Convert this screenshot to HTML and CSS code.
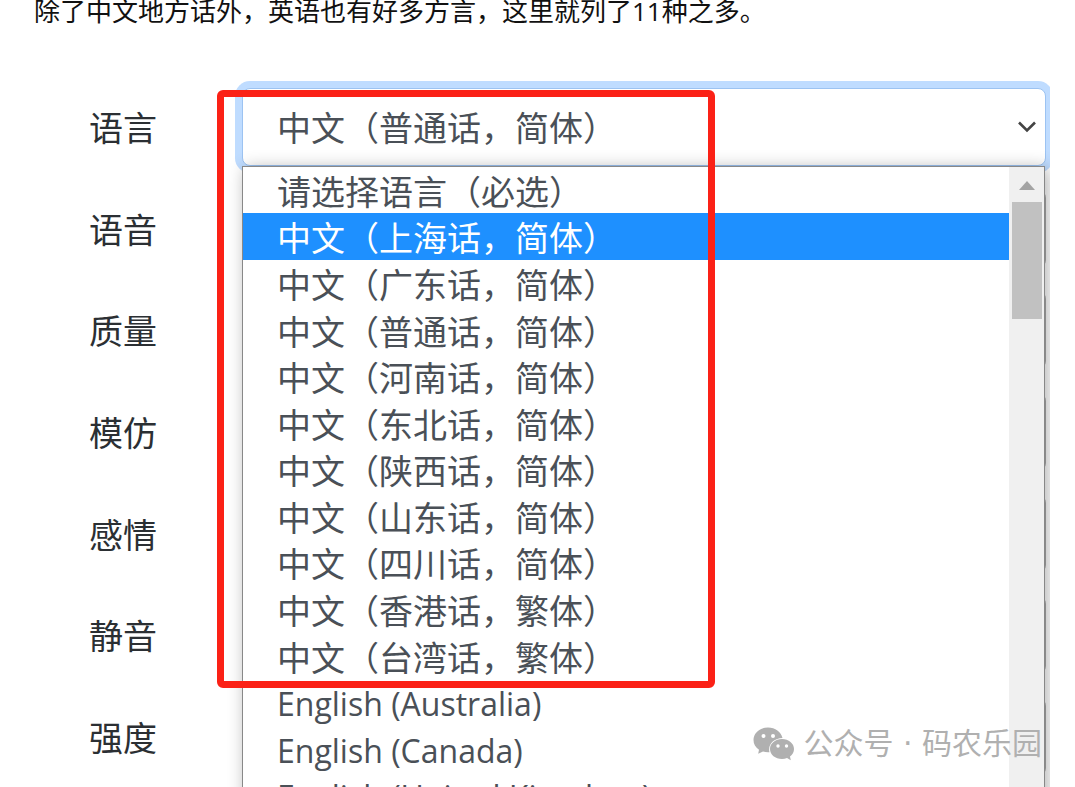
FILE: index.html
```
<!DOCTYPE html>
<html lang="zh-CN">
<head>
    <meta charset="UTF-8">
    <meta name="viewport" content="width=device-width, initial-scale=1.0">
    <title>语言选择</title>
    <link rel="stylesheet" href="styles.css">
</head>
<body>
    <main class="article">
        <p class="intro">除了中文地方话外，英语也有好多方言，这里就列了11种之多。</p>

        <div class="figure">
            <form class="voice-form">
                <div class="form-row">
                    <label for="language">语言</label>
                    <div class="field active">
                        <select id="language">
                            <option>中文（普通话，简体）</option>
                        </select>
                        <svg class="chevron" viewBox="0 0 20 14" aria-hidden="true">
                            <path d="M2 2.5L10 10.5L18 2.5" fill="none" stroke="#444" stroke-width="2.6"/>
                        </svg>
                        <div class="dropdown">
                            <ul class="options" role="listbox" aria-label="语言">
                                <li role="option">请选择语言（必选）</li>
                                <li role="option" class="selected" aria-selected="true">中文（上海话，简体）</li>
                                <li role="option">中文（广东话，简体）</li>
                                <li role="option">中文（普通话，简体）</li>
                                <li role="option">中文（河南话，简体）</li>
                                <li role="option">中文（东北话，简体）</li>
                                <li role="option">中文（陕西话，简体）</li>
                                <li role="option">中文（山东话，简体）</li>
                                <li role="option">中文（四川话，简体）</li>
                                <li role="option">中文（香港话，繁体）</li>
                                <li role="option">中文（台湾话，繁体）</li>
                                <li role="option" class="latin">English (Australia)</li>
                                <li role="option" class="latin">English (Canada)</li>
                                <li role="option" class="latin">English (United Kingdom)</li>
                            </ul>
                            <div class="scrollbar">
                                <svg class="arrow-up" viewBox="0 0 16 9" aria-hidden="true">
                                    <path d="M8 0L16 9H0Z" fill="#a3a3a3"/>
                                </svg>
                                <div class="thumb"></div>
                            </div>
                        </div>
                    </div>
                </div>
                <div class="form-row">
                    <label for="voice">语音</label>
                    <div class="field"><select id="voice"></select></div>
                </div>
                <div class="form-row">
                    <label for="quality">质量</label>
                    <div class="field"><select id="quality"></select></div>
                </div>
                <div class="form-row">
                    <label for="imitate">模仿</label>
                    <div class="field"><select id="imitate"></select></div>
                </div>
                <div class="form-row">
                    <label for="emotion">感情</label>
                    <div class="field"><select id="emotion"></select></div>
                </div>
                <div class="form-row">
                    <label for="silence">静音</label>
                    <div class="field"><select id="silence"></select></div>
                </div>
                <div class="form-row">
                    <label for="strength">强度</label>
                    <div class="field"><select id="strength"></select></div>
                </div>
            </form>

            <div class="highlight"></div>

            <div class="watermark">
                <svg viewBox="0 0 42 34" aria-hidden="true">
                    <path d="M15 0.500C6.800 0.500 0.500 6 0.500 13C0.500 17 2.500 20.400 6 22.700L5.200 26.800L10 24.600C12 25.100 14 25.400 16.500 25.200C14.500 17.500 21 11 29.500 11C28 5 22.300 0.500 15 0.500Z"/>
                    <path d="M29 12C22.300 12 17 16.500 17 22C17 27.700 22.300 32 29 32C30.800 32 32.500 31.700 34 31.100L37.800 33.200L37 29.600C39.500 27.700 41 25 41 22C41 16.500 35.700 12 29 12Z"/>
                    <g fill="#fff">
                        <circle cx="10.500" cy="9" r="2"/>
                        <circle cx="20" cy="9" r="2"/>
                        <circle cx="25" cy="19" r="1.700"/>
                        <circle cx="33.500" cy="19" r="1.700"/>
                    </g>
                </svg>
                <span>公众号 · 码农乐园</span>
            </div>
        </div>
    </main>
</body>
</html>
```
FILE: styles.css
```
* {
    box-sizing: border-box;
}
body {
    height: 100vh;
    margin: 0;
    overflow: hidden;
    background: #fff;
    font-family: "Open Sans", "Noto Sans CJK SC", sans-serif;
}
.article {
    padding: 0 25px;
}
.intro {
    margin: 0;
    padding: 0 9px;
    height: 76px;
    font-family: "Open Sans", "Noto Sans CJK SC", sans-serif;
    font-size: 26px;
    line-height: 22px;
    color: #111;
}
.figure {
    position: relative;
    overflow: hidden;
}
.voice-form {
    display: flex;
    flex-direction: column;
    height: 712px;
}
.form-row {
    display: flex;
    flex: 1;
    align-items: center;
    padding: 0 4px 0 64px;
}
.form-row label {
    width: 153px;
    padding-top: 2px;
    font-size: 34px;
    line-height: 44px;
    color: #2b2f33;
}
.field {
    position: relative;
    flex: 1;
    height: 78px;
}
.field select {
    appearance: none;
    display: block;
    width: 100%;
    height: 100%;
    padding: 2px 34px 0;
    border: 2px solid #aaa;
    border-radius: 8px;
    background: #fff;
    font-family: inherit;
    font-size: 34px;
    color: #4a5057;
}
.field.active {
    z-index: 1;
}
.field.active select {
    border: 1px solid #9cc3f2;
    outline: none;
    box-shadow: 0 0 0 7px #bfdcff;
}
.chevron {
    position: absolute;
    top: 32px;
    right: 9px;
    width: 20px;
    height: 14px;
}
.dropdown {
    position: absolute;
    top: 100%;
    left: 0;
    right: 1px;
    display: flex;
    border: 1px solid #888;
    background: #fff;
    box-shadow: 3px 2px 16px rgba(0, 0, 0, 0.3);
}
.options {
    flex: 1;
    display: grid;
    grid-auto-rows: minmax(0, 1fr);
    height: 652px;
    margin: 0;
    padding: 0;
    list-style: none;
    font-size: 34px;
    line-height: 50px;
    color: #4a5057;
}
.options li {
    padding-left: 34px;
}
.options .latin {
    font-size: 32px;
}
.options .selected {
    background: #1e90ff;
    color: #fff;
}
.scrollbar {
    display: flex;
    flex-direction: column;
    align-items: center;
    gap: 12px;
    width: 35px;
    padding-top: 14px;
    background: #f0f0f0;
}
.arrow-up {
    width: 16px;
    height: 9px;
}
.thumb {
    width: 30px;
    height: 117px;
    background: #c1c1c1;
}
.highlight {
    position: absolute;
    z-index: 2;
    top: 14px;
    left: 192px;
    width: 498px;
    height: 598px;
    border: 7px solid #fb2116;
    border-radius: 6px;
}
.watermark {
    position: absolute;
    z-index: 2;
    right: 8px;
    bottom: 24px;
    display: flex;
    align-items: center;
    gap: 8px;
    font-family: "DejaVu Sans", "Noto Sans CJK SC", sans-serif;
    font-size: 30px;
    line-height: 40px;
    color: #b0b0b0;
}
.watermark svg {
    width: 42px;
    height: 34px;
    fill: #b0b0b0;
}
```
